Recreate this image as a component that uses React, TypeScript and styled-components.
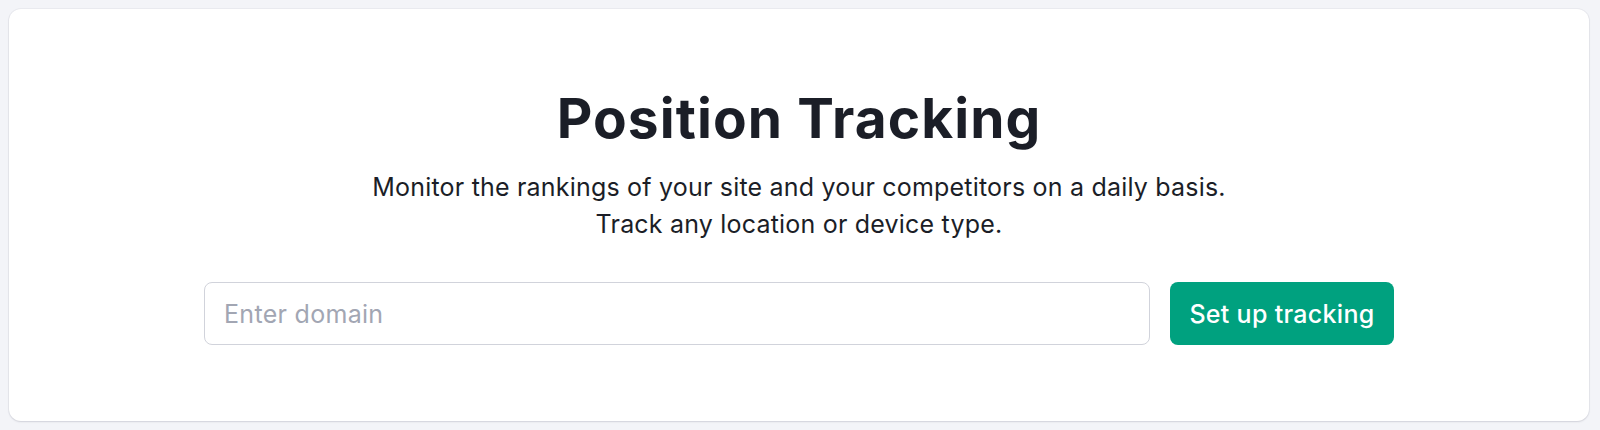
import React from "react";
import styled, { createGlobalStyle } from "styled-components";

const GlobalStyle = createGlobalStyle`
  html, body {
    margin: 0;
    padding: 0;
    background: #f3f4f8;
  }
  body {
    font-family: Inter, "Noto Sans", "Liberation Sans", sans-serif;
    -webkit-font-smoothing: antialiased;
  }
  * { box-sizing: border-box; }
`;

const Page = styled.div`
  padding: 9px 11px 9px 9px;
`;

const Card = styled.section`
  background: #ffffff;
  border-radius: 12px;
  box-shadow: 0 1px 2px rgba(30, 35, 60, 0.12), 0 0 0 1px rgba(30, 35, 60, 0.04);
  padding: 76px 24px 76px;
  display: flex;
  flex-direction: column;
  align-items: center;
`;

const Title = styled.h1`
  margin: 0;
  font-size: 55px;
  line-height: 66px;
  font-weight: 700;
  color: #1b1e27;
  letter-spacing: 1.1px;
`;

const Subtitle = styled.p`
  margin: 18px 0 0;
  font-size: 25px;
  line-height: 36.5px;
  font-weight: 400;
  color: #1b1e27;
  text-align: center;
  letter-spacing: 0.2px;
`;

const FormRow = styled.form`
  margin-top: 40px;
  width: 1190px;
  display: flex;
  gap: 20px;
`;

const DomainInput = styled.input`
  flex: 1;
  height: 63px;
  border: 1px solid #d1d3db;
  border-radius: 8px;
  padding: 0 19px;
  font-family: inherit;
  font-size: 25px;
  letter-spacing: 0.3px;
  color: #1b1e27;
  background: #fff;
  outline: none;
  &::placeholder {
    color: #a2a6b3;
  }
`;

const PrimaryButton = styled.button`
  width: 224px;
  height: 63px;
  border: none;
  border-radius: 8px;
  background: #00a17f;
  color: #ffffff;
  font-family: inherit;
  font-size: 25px;
  letter-spacing: 0.3px;
  font-weight: 500;
  cursor: pointer;
`;

export default function App() {
  return (
    <>
      <GlobalStyle />
      <Page>
        <Card>
          <Title>Position Tracking</Title>
          <Subtitle>
            Monitor the rankings of your site and your competitors on a daily basis.
            <br />
            Track any location or device type.
          </Subtitle>
          <FormRow onSubmit={(e) => e.preventDefault()}>
            <DomainInput placeholder="Enter domain" />
            <PrimaryButton type="submit">Set up tracking</PrimaryButton>
          </FormRow>
        </Card>
      </Page>
    </>
  );
}
